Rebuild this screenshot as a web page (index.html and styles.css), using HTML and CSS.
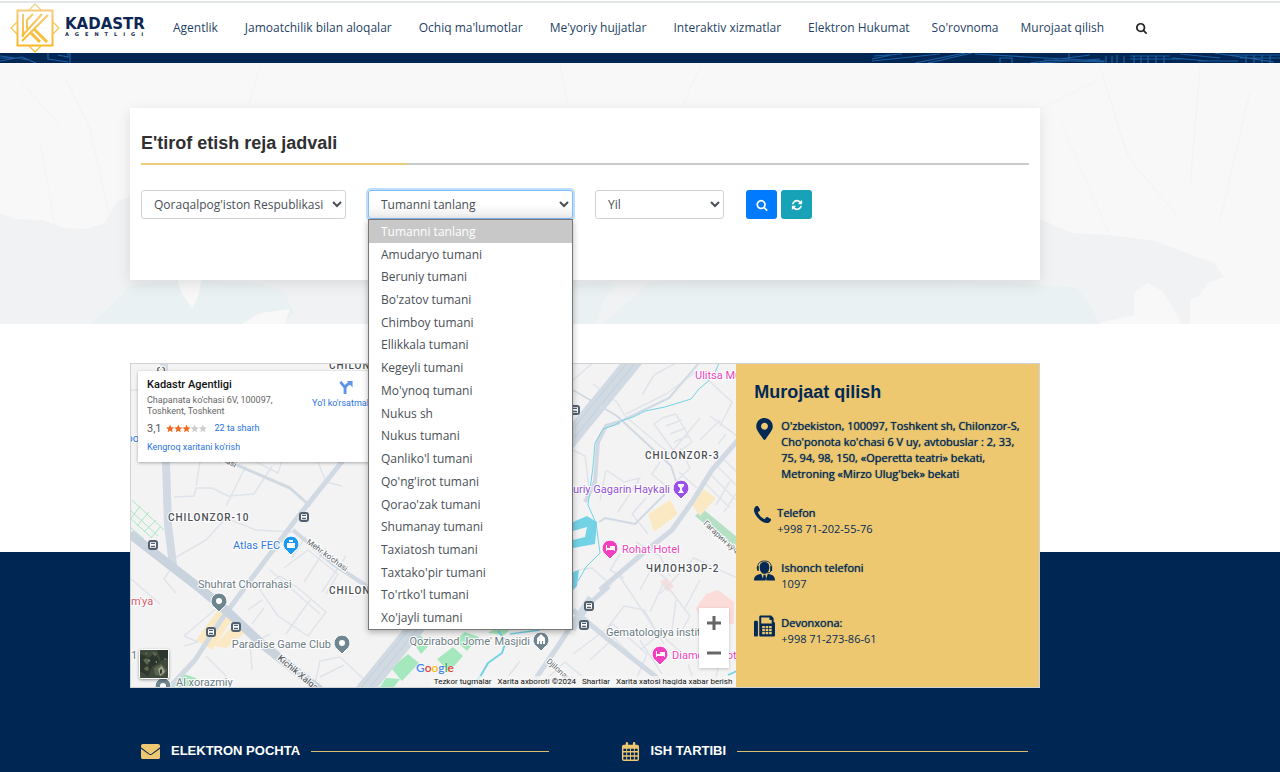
FILE: index.html
```html
<!DOCTYPE html>
<html lang="uz">
<head>
<meta charset="utf-8">
<meta name="viewport" content="width=device-width, initial-scale=1">
<title>Kadastr agentligi</title>
<link rel="stylesheet" href="styles.css">
</head>
<body>
<svg class="sprite" aria-hidden="true">
  <symbol id="i-search" viewBox="0 0 1664 1792"><path d="M1152 832q0-185-131.5-316.5t-316.5-131.5-316.5 131.5-131.5 316.5 131.5 316.5 316.5 131.5 316.5-131.5 131.5-316.5zm512 832q0 52-38 90t-90 38q-54 0-90-38l-343-342q-179 124-399 124-143 0-273.5-55.5t-225-150-150-225-55.5-273.5 55.5-273.5 150-225 225-150 273.5-55.5 273.5 55.5 225 150 150 225 55.5 273.5q0 220-124 399l343 343q37 37 37 90z"/></symbol>
  <symbol id="i-refresh" viewBox="0 0 1792 1792"><path d="M1639 1056q0 5-1 7-64 268-268 434.5t-478 166.5q-146 0-282.5-55t-243.5-157l-129 129q-19 19-45 19t-45-19-19-45v-448q0-26 19-45t45-19h448q26 0 45 19t19 45-19 45l-137 137q71 66 161 102t187 36q134 0 250-65t186-179q11-17 53-117 8-23 30-23h192q13 0 22.5 9.5t9.5 22.5zm25-800v448q0 26-19 45t-45 19h-448q-26 0-45-19t-19-45 19-45l138-138q-148-137-349-137-134 0-250 65t-186 179q-11 17-53 117-8 23-30 23h-199q-13 0-22.5-9.5t-9.5-22.5v-7q65-268 270-434.5t480-166.5q146 0 284 55.5t245 156.5l130-129q19-19 45-19t45 19 19 45z"/></symbol>
  <symbol id="i-bus" viewBox="-6 -6 12 12"><rect x="-5" y="-5" width="10" height="10" rx="3" fill="#51606f"/><rect x="-3" y="-3" width="6" height="6" rx="1" fill="#fff"/><path d="M-2-1.600h4M-2 1.500h4" stroke="#51606f" stroke-width="1.400"/></symbol>
</svg>

<header class="topbar">
  <a class="logo" href="#" aria-label="Kadastr agentligi">
    <svg class="logo-mark" viewBox="0 0 50 50" aria-hidden="true">
      <defs><linearGradient id="gold" gradientUnits="userSpaceOnUse" x1="0" y1="0" x2="0" y2="50"><stop offset="0" stop-color="#f3cf8a"/><stop offset="1" stop-color="#fbb516"/></linearGradient></defs>
      <g fill="none" stroke="url(#gold)">
        <path d="M25 1 49 25 25 49 1 25Z" stroke-width="1.200"/>
        <rect x="7.500" y="7.500" width="35" height="35" stroke-width="2" fill="#fff"/>
        <path d="M13 11v23M17 26V17l6-6M12 38 38 12M12 33 32 11" stroke-width="2"/>
        <path d="M21 30l9 9M24 26l13 13" stroke-width="3"/>
      </g>
    </svg>
    <span class="logo-text"><span class="logo-name">KADASTR</span><span class="logo-sub">AGENTLIGI</span></span>
  </a>
  <nav class="nav" aria-label="Asosiy menyu">
    <a href="#">Agentlik</a>
    <a href="#">Jamoatchilik bilan aloqalar</a>
    <a href="#">Ochiq ma'lumotlar</a>
    <a href="#">Me'yoriy hujjatlar</a>
    <a href="#">Interaktiv xizmatlar</a>
    <a href="#">Elektron Hukumat</a>
    <a href="#" class="near">So'rovnoma</a>
    <a href="#" class="near">Murojaat qilish</a>
    <button class="search-toggle" type="button" aria-label="Qidirish"><svg aria-hidden="true"><use href="#i-search"/></svg></button>
  </nav>
</header>

<div class="strip" aria-hidden="true">
  <svg viewBox="0 0 1280 10" preserveAspectRatio="xMidYMid slice">
    <g fill="none" stroke="#1f5da0" stroke-width="1.200">
      <path d="M0 3 30 7M0 8 22 4l14 6M48 0v6l20 3M58 2l10 2V0M70 0v10M0 5h14"/>
      <path d="M872 8 940 1M874 3l28-2M872 6l20-4M915 10l50-10M928 10 972 0M975 1l70 4 60 3M1000 10V5h12v5M1030 10l60-8M1040 10l60-4M1069 0v6M1044 7l60 2"/>
      <path d="M1106 3v7M1112 3v7M1117 2v8M1124 3v7M1130 3h40M1130 6h48M1134 3v7M1141 3v7M1148 3v7M1156 3v7M1164 3v7M1172 5l36 3M1180 1l40 4M1198 8h40M1214 0l60 9M1230 2h50M1240 5h40M1246 2v8M1254 2v8M1262 2v8M1270 2v8"/>
    </g>
  </svg>
</div>

<main>
  <section class="hero">
    <svg class="hero-map" viewBox="0 62 1280 262" preserveAspectRatio="xMidYMin slice" aria-hidden="true">
      <path fill="#f0f2f4" d="M0 212 14 218l28 1 22 8 22 1 18-6 14-22 20-8 110 16 190 10 250 4 200-8 152 4 32 14 38 2 44 6 60 22 10 14-16 6-10 14-8 2v42l-14-28-14-22-14-8-14 10v22l-36 8-6 22 28 28 12 22H0Z"/>
      <path fill="#eaf1f2" d="M130 284l60-6 70 4 24 8 10 22-14 12H90l26-24ZM572 284l28-4 16 4-12 14-8 26h-24ZM650 280l180-4 160 4 86 6 14 18 10 20H600l30-24Z"/>
      <path fill="#f8f8f8" d="M176 276l26 0-4 20-6 12-10-16ZM240 324l20-12 30-4-6 16Z"/>
      <g fill="none" stroke="#f2f3f4"><path d="M20 80l40 44M66 78l24 50 20 90M260 66l-12 40M560 64l8 42M700 66l-18 40M1036 110l60-30M1100 66l28 90 50 60M1200 66l-10 120M1250 90l-30 130M1060 120l70 160M40 140l30 170"/></g>
    </svg>
    <div class="card">
      <h1>E'tirof etish reja jadvali</h1>
      <form class="filters">
        <select class="field wide" aria-label="Viloyat"><option>Qoraqalpog'iston Respublikasi</option></select>
        <div class="combo">
          <select class="field focused" aria-label="Tuman"><option>Tumanni tanlang</option></select>
          <ul class="options" role="listbox" aria-label="Tumanlar">
            <li role="option" aria-selected="true" class="selected">Tumanni tanlang</li>
            <li role="option">Amudaryo tumani</li>
            <li role="option">Beruniy tumani</li>
            <li role="option">Bo'zatov tumani</li>
            <li role="option">Chimboy tumani</li>
            <li role="option">Ellikkala tumani</li>
            <li role="option">Kegeyli tumani</li>
            <li role="option">Mo'ynoq tumani</li>
            <li role="option">Nukus sh</li>
            <li role="option">Nukus tumani</li>
            <li role="option">Qanliko'l tumani</li>
            <li role="option">Qo'ng'irot tumani</li>
            <li role="option">Qorao'zak tumani</li>
            <li role="option">Shumanay tumani</li>
            <li role="option">Taxiatosh tumani</li>
            <li role="option">Taxtako'pir tumani</li>
            <li role="option">To'rtko'l tumani</li>
            <li role="option">Xo'jayli tumani</li>
          </ul>
        </div>
        <select class="field year" aria-label="Yil"><option>Yil</option></select>
        <div class="actions">
          <button type="button" class="btn find" aria-label="Qidirish"><svg aria-hidden="true"><use href="#i-search"/></svg></button>
          <button type="button" class="btn reset" aria-label="Yangilash"><svg aria-hidden="true"><use href="#i-refresh"/></svg></button>
        </div>
      </form>
    </div>
  </section>

  <section class="contact">
    <div class="contact-box">
      <div class="map">
        <svg class="map-canvas" viewBox="131 364 606 323" preserveAspectRatio="xMinYMin slice" role="img" aria-label="Xarita">
          <rect x="130" y="363" width="607" height="324" fill="#f4f3f4"/>
          <g fill="#a5e8bd">
            <path d="M391 668l17-14 11 9-17 18ZM412 641l8-6 10 9-9 10ZM437 659l16-12 10 9-14 16ZM455 640l10-8 14 5-12 14ZM488 633l8-5h16l-8 7ZM380 687l6-9 14 1-6 8ZM172 684l12-10 12 4v9h-24Z"/>
          </g>
          <path d="M695 516l8-7 34 28v14Z" fill="#b5e0c4"/>
          <g fill="none" stroke="#a8e6c4"><path d="M130 510l28 26M130 518l22 20M130 527l14 12M132 500l32 30M130 520l10-14M137 526l12-14M144 532l12-12M151 538l10-12"/></g>
          <path fill="#fbe9c4" d="M196 640l22-30 14 10-20 30ZM214 646l22-24 10 10-20 16ZM648 514l22-14 8 14-24 18ZM690 502l12-14 14 10-16 18Z"/>
          <path fill="#fcdcd9" d="M660 582l6-4 8 8-6 6ZM696 608l10-14 12-4 16 12v22h-30Z"/>
          <g fill="none" stroke="#dfe4ea" stroke-width="1.500" stroke-linejoin="round">
            <path d="M174 497l20-1 2-8 16 0 16 8 26-2 18-28M196 486l4-24M226 506l20-40M130 390h10M250 459l28 14 6-18M318 462l8 20 16 4"/>
            <path d="M168 562l38-22 20-22 30 12 36 2M172 567l-8 12 12 14M130 578l30 26M184 636l40-34M184 636l14 6-14 4M260 590l20-14 18 12 28 24-18 24-30-20ZM270 580l16 10M284 568l24-18 30 24-12 20M306 536l-14 22M326 548l-22 34M346 556l-24 36M270 570l50 44M262 600l-14 10M252 624l12-16M252 670l-2-26 20-10M206 656l20 20-6 11M314 687l6-26 20-4 28 26M320 677l24-12M310 600l-24 34"/>
            <path d="M573 380l30-26M573 450l12 6 5 40M642 395l12-20 22-12M626 414l40-20 30-22M625 416l45 38 30-36M625 416l-8-14-24-18M704 376l28 26-12 24M662 418l14-4 16 28-16 12-22-30ZM666 426l16-6M670 434l16-6M674 442l14-6M660 462l-8 12 14 12M680 448l10 20-14 14M697 488l-18-16M710 416l27 20M700 440l20-20M718 444l8-10M702 480l28 28M708 472l28 28M715 464l22 22M720 456l17 16M716 505l14-24M724 512l13-20M606 470l18 12 16-4-22 34M646 498l-14 16 16 20M600 500l6-30M612 586l-20-18-14 2M620 554l-10 16 14 8M636 542l24 14 10 20M660 594l34-36 43 20M640 590l12-22 16 12M618 574l40 60M700 580l-16 30"/>
            <path d="M573 654l40-30 34 30-14 33M590 660l24-22 22 22M606 630l18-24 20 4 20 34M640 650l20-16 30 26M650 612l14-30 26 34-10 18M676 600l-4 30M688 664l8 23M718 668l-4 19M640 640l22 34M500 687l20-26M545 680l20-18 30 25"/>
          </g>
          <g fill="none" stroke="#d1dae3" stroke-linejoin="round">
            <path d="M164 363l2 100 2 62 5 40" stroke-width="8"/>
            <path d="M230 462l60 26 20 18" stroke-width="3"/>
            <path d="M345 458l-48 60-48 64-28 38-26 40-28 30" stroke-width="5"/>
            <path d="M293 530l40 34 40 26" stroke-width="4"/>
            <path d="M130 534l72 56 26 22 34 32 58 46" stroke-width="9" stroke="#c8d3dd"/>
            <path d="M340 720 640 353" stroke-width="17"/>
            <path d="M346 706 630 359M352 709 636 362" stroke="#c3cfdb"/>
            <path d="M573 390l44 26 54 50 6 18" stroke-width="2"/>
            <path d="M600 590l42-36 30-24 20-28 20-32 26-30" stroke-width="5"/>
            <path d="M623 420l46-22 36-42" stroke-width="2"/>
            <path d="M573 630l16-26 20-18M573 610l36 30 46 36 10 11M530 687l30-44 30-46" stroke-width="5"/>
            <path d="M599 522l6-4 30 6 30-30" stroke-width="2"/>
            <path d="M620 422l-14 4-8 16-3 40-10 20" stroke-width="4"/>
          </g>
          <g fill="none" stroke="#72d3e4" stroke-linejoin="round">
            <path d="M719 363l-6 14-14 12-8 10-26 8-20 4-12 6-12 4-6 4-12 4-8 14-2 24-3 22-2 16 8 18 4 30-14 14-8 14"/>
            <path d="M470 687l10-10 8-14 14-10 4-12-8-10" stroke-width="2"/>
            <path d="M510 634l30-4M728 675l9-4" stroke-width="1.500"/>
          </g>
          <path fill="#73d2e6" d="M573 522l14-6 10 6-2 22-22 4ZM573 572l6-2-2 16-4 4Z"/><path fill="#f4f3f4" d="M573 531l14-4-2 10-12 3Z"/>
          <use href="#i-bus" x="147" y="539" width="12" height="12"/><use href="#i-bus" x="298" y="511" width="12" height="12"/><use href="#i-bus" x="205" y="626" width="12" height="12"/><use href="#i-bus" x="230" y="621" width="12" height="12"/><use href="#i-bus" x="569" y="404" width="12" height="12"/><use href="#i-bus" x="583" y="600" width="12" height="12"/><use href="#i-bus" x="578" y="619" width="12" height="12"/>
          <g stroke="#fff">
            <path fill="#6f858f" d="M219 612l-4-4a8 8 0 1 1 8 0ZM342 654l-4-4a8 8 0 1 1 8 0ZM541 651l-4-4a8 8 0 1 1 8 0ZM163 697l-4-4a8 8 0 1 1 8 0Z"/>
            <path fill="#1a9af5" d="M291 555l-4-4a8 8 0 1 1 8 0Z"/>
            <path fill="#9b51e8" d="M681 499l-4-4a8 8 0 1 1 8 0Z"/>
            <path fill="#f23fc0" d="M610 559l-4-4a8 8 0 1 1 8 0ZM660 665l-4-4a8 8 0 1 1 8 0Z"/>
          </g>
          <g fill="#fff"><circle cx="219" cy="601" r="3"/><circle cx="342" cy="643" r="3"/><circle cx="163" cy="686" r="3"/><path d="M287 543h8v5h-8ZM289 540h4v2h-4ZM678 484h6v2l-2 2v2l2 3h-6l2-3v-2l-2-2ZM606 545h1v3h3v-2h5v5h-1v-1h-7v1h-1ZM656 651h1v3h3v-2h5v5h-1v-1h-7v1h-1ZM537 644v-6l2-2 2-2 2 2 2 2v6h-2v-3h-1v3h-2v-3h-1v3Z"/></g>
          <g class="map-labels">
            <text class="area" x="168" y="521">CHILONZOR-10</text>
            <text class="area" x="329" y="369">CHILONZOR</text>
            <text class="area" x="329" y="594">CHILONZOR</text>
            <text class="area" x="645" y="459">CHILONZOR-3</text>
            <text class="area" x="646" y="572">ЧИЛОНЗОР-2</text>
            <text class="area" transform="translate(165 373) rotate(-90)">C</text>
            <text x="198" y="588">Shuhrat Chorrahasi</text>
            <text class="end" x="331" y="648">Paradise Game Club</text>
            <text class="end" x="530" y="645">Qozirabod Jome' Masjidi</text>
            <text x="606" y="636">Gematologiya instituti</text>
            <text x="176" y="686">Al xorazmiy</text>
            <text class="blue" x="233" y="549">Atlas FEC</text>
            <text class="blue end" x="139" y="442">oo</text>
            <text class="red" x="131" y="605">m'ya</text>
            <text class="violet end" x="670" y="493">Yuriy Gagarin Haykali</text>
            <text class="pink" x="622" y="553">Rohat Hotel</text>
            <text class="pink" x="672" y="659">Diamond Hotel</text>
            <text class="pink" x="695" y="379">Ulitsa Muqimiy</text>
            <text class="road" transform="translate(306 543) rotate(36)">Mehr ko'chasi</text>
            <text class="road big" transform="translate(277 659) rotate(40)">Kichik Xalqa</text>
            <text class="road" transform="translate(703 524) rotate(43)">Гагарин кўчаси</text>
            <text class="road" transform="translate(546 662) rotate(42)">Djilonariq</text>
            <text class="road" transform="translate(218 459) rotate(28)">chasi</text>
            <text x="131" y="659">1</text>
          </g>
        </svg>

        <div class="place">
          <div class="place-info">
            <strong>Kadastr Agentligi</strong>
            <span class="place-addr">Chapanata ko'chasi 6V, 100097,<br>Toshkent, Toshkent</span>
            <span class="rating">3,1
              <svg viewBox="0 0 50 10" role="img" aria-label="5 dan 3,1"><defs><path id="star" d="M5 0l1.400 3.400L10 3.700 7.200 6.100 8.100 9.700 5 7.700 1.900 9.700 2.800 6.100 0 3.700l3.600-.3Z"/></defs><g fill="#f0691e"><use href="#star"/><use href="#star" x="10"/><use href="#star" x="20"/></g><g fill="#ccc"><use href="#star" x="30"/><use href="#star" x="40"/></g></svg>
              <a href="#">22 ta sharh</a>
            </span>
            <a href="#">Kengroq xaritani ko'rish</a>
          </div>
          <a class="route" href="#">
            <svg viewBox="0 0 16 16" aria-hidden="true"><path d="M2 2l5 6v7M7 10c0-4 3-6 6-7" fill="none" stroke="#5b96ea" stroke-width="3"/><path d="M9 1h6v7Z" fill="#5b96ea"/></svg>
            Yo'l ko'rsatmalari
          </a>
        </div>

        <div class="zoom">
          <button type="button" aria-label="Kattalashtirish"><svg viewBox="0 0 14 14" aria-hidden="true"><path d="M0 7h14M7 0v14"/></svg></button>
          <button type="button" aria-label="Kichiklashtirish"><svg viewBox="0 0 14 14" aria-hidden="true"><path d="M0 7h14"/></svg></button>
        </div>

        <button class="satellite" type="button" aria-label="Sun'iy yo'ldosh">
          <svg viewBox="0 0 28 28" aria-hidden="true"><rect width="28" height="28" fill="#404a3b"/><path fill="#2b352b" d="M0 4l9 4 6-5 5 9-8 5-4 9-8-5ZM17 0h11v8l-7 3Z"/><path fill="#5d6653" d="M3 10l3-2 4 3-3 4ZM14 18l7-4 6 6-4 6-8-1ZM12 2l5 1-2 4ZM4 18l4-2 1 4-3 3Z"/><path fill="#a2a28a" d="M18 19l4-3 3 6-5 4ZM8 9l2 1-1 2ZM15 12l2-1v2ZM24 8l2 1-1 1ZM5 4l2-1v1Z"/><path fill="#303a31" d="M20 20l2-1v4l-2 1ZM3 20l7 1-2 5Z"/></svg>
        </button>

        <div class="google" aria-label="Google"><span class="g-blue">G</span><span class="g-red">o</span><span class="g-yellow">o</span><span class="g-blue">g</span><span class="g-green">l</span><span class="g-red">e</span></div>
        <div class="credits">
          <a href="#">Tezkor tugmalar</a><span>Xarita axboroti ©2024</span><a href="#">Shartlar</a><a href="#">Xarita xatosi haqida xabar berish</a>
        </div>
      </div>

      <div class="info">
        <h2>Murojaat qilish</h2>
        <div class="item">
          <svg class="pin" viewBox="0 0 384 512" aria-hidden="true"><path d="M172.268 501.670C26.970 291.031 0 269.413 0 192 0 85.961 85.961 0 192 0s192 85.961 192 192c0 77.413-26.970 99.031-172.268 309.670-9.535 13.774-29.930 13.773-39.464 0zM192 272c44.183 0 80-35.817 80-80s-35.817-80-80-80-80 35.817-80 80 35.817 80 80 80z"/></svg>
          <p><b>O'zbekiston, 100097, Toshkent sh, Chilonzor-S, Cho'ponota ko'chasi 6 V uy, avtobuslar : 2, 33, 75, 94, 98, 150, «Operetta teatri» bekati, Metroning «Mirzo Ulug'bek» bekati</b></p>
        </div>
        <div class="item">
          <svg class="phone" viewBox="192 256 1408 1408" aria-hidden="true"><path d="M1600 1368q0 27-10 70.500t-21 68.500q-21 50-122 106-94 51-186 51-27 0-53-3.500t-57.500-12.500-47-14.500-55.500-20.500-49-18q-98-35-175-83-127-79-264-216t-216-264q-48-77-83-175-3-9-18-49t-20.500-55.500-14.500-47-12.500-57.500-3.500-53q0-92 51-186 56-101 106-122 25-11 68.500-21t70.500-10q14 0 21 3 18 6 53 76 11 19 30 54t35 63.500 31 53.500q3 4 17.500 25t21.500 35.500 7 28.500q0 20-28.500 50t-62 55-62 53-28.500 46q0 9 5 22.500t8.500 20.500 14 24 11.500 19q76 137 174 235t235 174q2 1 19 11.500t24 14 20.500 8.500 22.500 5q18 0 46-28.500t53-62 55-62 50-28.500q14 0 28.500 7t35.500 21.500 25 17.500q25 15 53.500 31t63.500 35 54 30q70 35 76 53 3 7 3 21z"/></svg>
          <p><b>Telefon</b><br>+998 71-202-55-76</p>
        </div>
        <div class="item">
          <svg viewBox="0 0 22 22" aria-hidden="true"><path d="M6 7c0-4 2-5.500 5-5.500S16 3 16 7s-2 7-5 7-5-3-5-7ZM0 21c0-4 2-6 7.500-7l2.500 7ZM22 21c0-4-2-6-7.500-7L12 21ZM10 15h2l1 6H9ZM3 6h2v5H4q-1.500-1-1-5ZM17 6h2v5h-2Z"/><path d="M4 7C4 2 7 .6 11 .6S18 2 18 7v4q-1 2-4 2" fill="none" stroke="#022a55"/></svg>
          <p><b>Ishonch telefoni</b><br>1097</p>
        </div>
        <div class="item">
          <svg viewBox="0 0 512 512" aria-hidden="true"><path fill-rule="evenodd" d="M64 128H32c-18 0-32 14-32 32v320c0 18 14 32 32 32h32c18 0 32-14 32-32V160c0-18-14-32-32-32Zm416 32V77c0-8-3-17-9-23L427 9c-6-6-15-9-23-9H160c-18 0-32 14-32 32v448c0 18 14 32 32 32h320c18 0 32-14 32-32V192c0-18-14-32-32-32ZM176 48h200v48c0 9 7 16 16 16h40v80H176ZM200 256h64v56h-64Zm84 0h64v56h-64Zm84 0h64v56h-64ZM200 330h64v56h-64Zm84 0h64v56h-64Zm84 0h64v56h-64ZM200 404h64v56h-64Zm84 0h64v56h-64Zm84 0h64v56h-64Z"/></svg>
          <p><b>Devonxona:</b><br>+998 71-273-86-61</p>
        </div>
      </div>
    </div>
  </section>
</main>

<footer class="footer">
  <div class="footer-grid">
    <h3><svg viewBox="0 0 20 16" aria-hidden="true"><path d="M2 0h16q2 0 2 2v1.500L11.500 10q-1.500 1.200-3 0L0 3.500V2Q0 0 2 0ZM0 5l8 6q2 1.500 4 0l8-6v9q0 2-2 2H2q-2 0-2-2Z"/></svg><span>ELEKTRON POCHTA</span></h3>
    <h3><svg viewBox="0 0 18 20" aria-hidden="true"><path fill-rule="evenodd" d="M2 3h2V1.500Q4 0 5.200 0T6.500 1.500V3h5V1.500Q11.500 0 12.800 0T14 1.500V3h2q2 0 2 2v13q0 2-2 2H2q-2 0-2-2V5q0-2 2-2ZM1.500 7v2.500h3V7Zm4 0v2.500h3V7Zm4 0v2.500h3V7Zm4 0v2.500h3V7ZM1.500 11v3h3v-3Zm4 0v3h3v-3Zm4 0v3h3v-3Zm4 0v3h3v-3ZM1.500 15.500v3h3v-3Zm4 0v3h3v-3Zm4 0v3h3v-3Zm4 0v3h3v-3Z"/></svg><span>ISH TARTIBI</span></h3>
  </div>
</footer>
</body>
</html>
```

FILE: styles.css
```css
* { box-sizing: border-box; }

body {
  margin: 0;
  background: #fff;
  color: #495057;
  font-family: "Open Sans", sans-serif;
  font-size: 12px;
}

a { text-decoration: none; }
button { padding: 0; border: 0; cursor: pointer; }
h1, h2, h3, p, ul { margin: 0; padding: 0; }
.sprite { position: absolute; width: 0; height: 0; }

/* Header */
.topbar {
  display: flex;
  align-items: center;
  height: 53px;
  padding-left: 10px;
  background: linear-gradient(#fff 1px, #e3e6e6 1px, #e3e6e6 3px, #fff 3px);
}
.logo { display: flex; align-items: center; gap: 5px; width: 163px; }
.logo-mark { width: 50px; height: 50px; margin-top: 3px; flex: none; }
.logo-text { display: flex; flex-direction: column; color: #0b2653; font-family: "DejaVu Sans", sans-serif; font-weight: 700; }
.logo-name { font-size: 15px; line-height: 14px; }
.logo-sub { font-size: 5px; line-height: 6px; letter-spacing: 6px; }
.nav { display: flex; align-items: center; gap: 27px; white-space: nowrap; padding-top: 2px; }
.nav a { color: #1f3f66; font-size: 12px; line-height: 18px; }
.nav .near { margin-left: -5px; }
.search-toggle { display: flex; background: none; margin-left: 5px; }
.search-toggle svg { width: 11px; height: 12px; fill: #222; }

.strip { height: 10px; background: #002753; overflow: hidden; }
.strip svg { display: block; width: 100%; height: 10px; }

/* Filter card */
.hero { position: relative; padding: 45px 16px 44px 130px; background: #f8f8f8; }
.hero-map { position: absolute; inset: 0; width: 100%; height: 100%; }
.card {
  position: relative;
  z-index: 2;
  max-width: 910px;
  min-height: 172px;
  padding: 22px 11px;
  background: #fff;
  box-shadow: 0 4px 14px rgba(0, 0, 0, .1);
}
.card h1 {
  color: #303030;
  font: 700 18px/26px "Liberation Sans", sans-serif;
  padding-bottom: 9px;
  background: linear-gradient(90deg, #ebcc78 30%, #c9cbcb 30%) bottom / 100% 2px no-repeat;
}
.filters { display: flex; gap: 22px; margin-top: 25px; }
.field {
  display: block;
  width: 205px;
  height: 29px;
  padding: 0 0 0 8px;
  border: 1px solid #ced4da;
  border-radius: 3px;
  background: #fff;
  color: #495057;
  font: 12px/20px "Open Sans", sans-serif;
}
.year { width: 129px; }
.combo { position: relative; }
.focused { border-color: #80bdff; box-shadow: 0 0 0 2px #bfdeff; background: linear-gradient(#fff 50%, #ececec); }
.options {
  position: absolute;
  top: 29px;
  left: 0;
  right: 0;
  display: grid;
  grid-auto-rows: 1fr;
  height: 411px;
  border: 1px solid #777;
  background: #fff;
  box-shadow: 0 2px 6px rgba(0, 0, 0, .3);
  list-style: none;
}
.options li { display: flex; align-items: center; padding-left: 12px; }
.options .selected { background: #c8c8c8; color: #fff; }
.actions { display: flex; gap: 4px; }
.btn { display: grid; place-items: center; width: 31px; height: 29px; border-radius: 3px; }
.btn svg { width: 12px; height: 12px; fill: #fff; }
.find { background: #007bff; }
.reset { background: #17a2b8; }

/* Map and contacts */
.contact { padding: 39px 16px 0 130px; background: linear-gradient(#fff 228px, #002753 228px); }
.contact-box {
  display: grid;
  grid-template-columns: 2fr 1fr;
  max-width: 910px;
  min-height: 325px;
  border: 1px solid #cfd3d6;
}
.map { position: relative; overflow: hidden; font-family: Roboto, sans-serif; }
.map-canvas { position: absolute; inset: 0; width: 100%; height: 100%; }
.map-labels { font-size: 11px; fill: #6b7b83; stroke: #fff; stroke-width: 2px; paint-order: stroke; }
.map-labels .end { text-anchor: end; }
.map-labels .area { font-size: 10px; font-weight: 500; fill: #4b4f54; letter-spacing: 1px; }
.map-labels .blue { fill: #3276dd; }
.map-labels .red { fill: #d8566a; }
.map-labels .violet { fill: #9150d8; }
.map-labels .pink { fill: #ea45bd; }
.map-labels .road { font-size: 8px; fill: #5b6267; }
.map-labels .big { font-size: 9px; font-weight: 500; }

.place {
  position: absolute;
  top: 7px;
  left: 7px;
  display: flex;
  justify-content: space-between;
  width: 250px;
  padding: 7px 9px;
  background: #fff;
  box-shadow: 0 1px 3px rgba(0, 0, 0, .3);
  font-size: 9px;
}
.place-info { display: flex; flex-direction: column; gap: 4px; white-space: nowrap; }
.place-info strong { color: #111; font-size: 11px; line-height: 13px; font-weight: 500; }
.place-addr { color: #666; line-height: 11px; }
.place a { color: #2a73e0; line-height: 15px; }
.rating { display: flex; align-items: center; gap: 4px; color: #555; font-size: 11px; line-height: 15px; }
.rating svg { width: 41px; height: 9px; }
.rating a { margin-left: 4px; font-size: 9px; }
.place .route { display: flex; flex-direction: column; align-items: center; gap: 1px; white-space: nowrap; padding-top: 2px; }
.route svg { width: 16px; height: 15px; }

.zoom { position: absolute; right: 7px; bottom: 19px; display: grid; width: 30px; background: #fff; box-shadow: 0 1px 3px rgba(0, 0, 0, .2); }
.zoom button { display: grid; place-items: center; height: 30px; background: none; }
.zoom svg { width: 14px; height: 14px; stroke: #666; stroke-width: 3; }
.satellite { position: absolute; left: 8px; bottom: 8px; width: 30px; height: 30px; border: 1px solid #fff; border-radius: 2px; overflow: hidden; background: #404a3b; box-shadow: 0 1px 3px rgba(0, 0, 0, .4); }
.satellite svg { display: block; width: 28px; height: 28px; }
.google { position: absolute; left: 285px; bottom: 11px; font: 600 12px/16px Lato, sans-serif; text-shadow: 0 0 2px #fff; }
.g-blue { color: #4285f4; }
.g-red { color: #ea4335; }
.g-yellow { color: #fbbc04; }
.g-green { color: #34a853; }
.credits { position: absolute; right: 0; bottom: 0; display: flex; gap: 6px; padding: 0 4px; background: rgba(245, 245, 245, .75); font-size: 8px; line-height: 11px; color: #111; white-space: nowrap; }
.credits a { color: #111; }

.info { padding: 16px 18px 0 18px; background: #eec870; color: #022a55; font-size: 11px; line-height: 16px; }
.info h2 { font: 700 18px/24px "Liberation Sans", sans-serif; margin-bottom: 14px; }
.item { display: flex; gap: 6px; margin-bottom: 23px; }
.item svg { flex: none; width: 21px; height: 22px; fill: #022a55; }
.item .phone { width: 17px; height: 17px; margin-top: 1px; }
.item b { font-weight: 400; text-shadow: 0 0 1px #022a55; }

/* Footer */
.footer { min-height: 84px; padding: 53px 28px 12px 141px; background: #002753; }
.footer-grid { display: grid; grid-template-columns: 1fr 1fr; gap: 72px; max-width: 887px; }
.footer h3 { display: flex; align-items: center; gap: 11px; color: #fff; font: 700 13px/20px "Liberation Sans", sans-serif; white-space: nowrap; }
.footer h3::after { content: ""; flex: 1; height: 1px; background: #dcbd70; }
.footer svg { width: 19px; height: 19px; fill: #eec870; }
```
